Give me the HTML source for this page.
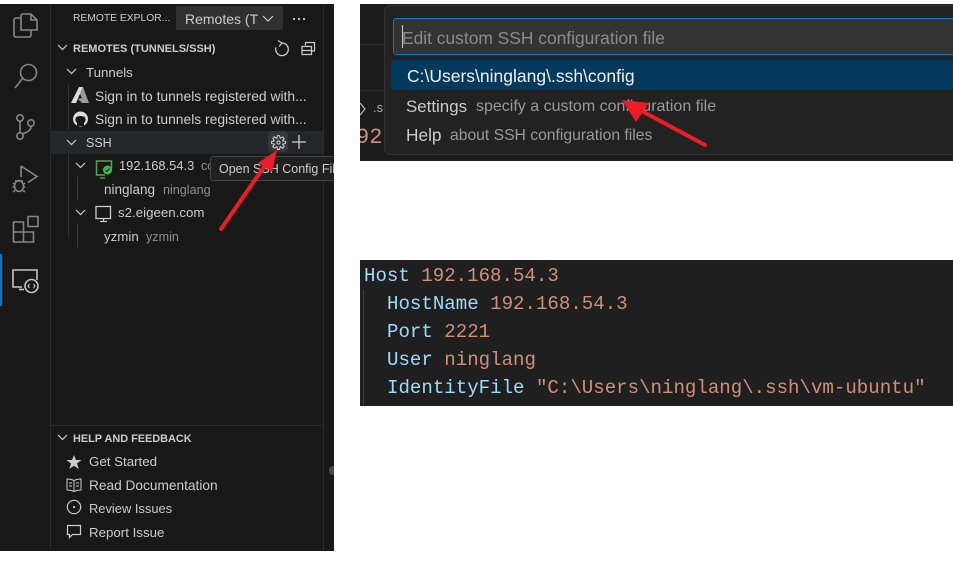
<!DOCTYPE html>
<html><head><meta charset="utf-8">
<style>
html,body{margin:0;padding:0;background:#fff;}
body{width:953px;height:561px;position:relative;overflow:hidden;font-family:"Liberation Sans",sans-serif;color:#ccc;}
div,span.a{position:absolute;}
.t{white-space:nowrap;font-size:13px;line-height:18px;color:#ccc;}
.d{color:#8f8f8f;font-size:12.6px;}
.b{font-weight:bold;font-size:11px;color:#ccc;}
.c{position:absolute;white-space:pre;font-family:"Liberation Mono",monospace;font-size:19.1px;line-height:28px;color:#ce9178;left:364px;}
.k{color:#9cdcfe;}
svg{position:absolute;overflow:visible;}
</style></head><body>

<!-- left window -->
<div style="left:0;top:4px;width:334px;height:547px;background:#181818;"></div>
<div style="left:50px;top:4px;width:1px;height:547px;background:#2b2b2b;"></div>
<div style="left:323px;top:4px;width:1px;height:547px;background:#2b2b2b;"></div>
<div style="left:0;top:254px;width:2px;height:52px;background:#0078d4;"></div>
<div style="left:51px;top:131px;width:272px;height:23px;background:#242628;"></div>
<div style="left:51px;top:425px;width:272px;height:1px;background:#2b2b2b;"></div>
<div style="left:68px;top:84px;width:1px;height:46px;background:#333;"></div>
<div style="left:68px;top:154px;width:1px;height:83px;background:#333;"></div>
<div style="left:77px;top:177px;width:1px;height:23px;background:#3a3a3a;"></div>
<div style="left:77px;top:224px;width:1px;height:23px;background:#3a3a3a;"></div>

<!-- activity icons -->
<svg style="left:0;top:0" width="50" height="310" fill="none" stroke="#868686" stroke-width="1.6">
<path d="M21 18h-5q-2 0-2 2v15q0 2 2 2h13q2 0 2-2v-5"/>
<path d="M23 14h8l6 6v10H21V16q0-2 2-2z"/>
<path d="M31 14v6h6"/>
<circle cx="28.500" cy="72.500" r="8"/><path d="M22.500 78.500L15 88"/>
<circle cx="20" cy="118" r="3.200"/><circle cx="20" cy="136" r="3.200"/><circle cx="31" cy="123" r="3.200"/>
<path d="M20 121.500V133M31 126.500q0 5-8 7"/>
<path d="M21 166l16 10.500-9 6"/><path d="M21 166v11"/>
<ellipse cx="19" cy="186" rx="4.500" ry="5.500"/><path d="M13 183l2 1.500M25 183l-2 1.500M12.500 187h2M23.500 187h2M13 192l2-1.500M25 192l-2-1.500M15 181h8"/>
<path d="M13.500 222h10v10h-10zM13.500 232h10v10h-10zM23.500 232h10v10h-10z"/><path d="M28 216.500h10v10H28z"/>
<g stroke="#c4c4c4">
<path d="M22 287h-9v-17h24v10"/><path d="M19 289.500h5"/>
<circle cx="31.500" cy="286" r="6.500" fill="#181818"/>
<path d="M29.500 284l-1.500 2 1.500 2M33.500 284l1.500 2-1.500 2" stroke-width="1.100"/>
</g>
</svg>

<!-- header -->
<div class="t" style="left:73px;top:10px;font-size:10.300px;color:#ccc;">REMOTE EXPLOR...</div>
<div style="left:176px;top:6px;width:107px;height:24px;background:#303030;border-radius:2px;"></div>
<div class="t" style="left:185px;top:10px;font-size:14px;color:#ccc;width:73px;overflow:hidden;">Remotes (Tunnels)</div>
<svg style="left:0;top:0" width="334" height="240" fill="none" stroke="#ccc" stroke-width="1.200">
<path d="M263 16l5 5 5-5"/>
<path d="M58 45l4.500 4.500L67 45M67 69l4.500 4.500L76 69M67 140l4.500 4.500L76 140M76 163l4.500 4.500L85 163M76 210l4.500 4.500L85 210"/>
<path d="M282 43a6.300 6.300 0 1 1-6 4.300" stroke-width="1.300"/>
<path d="M278 40.500l4 2.500-3 3.500" stroke-width="1.300"/>
<path d="M305.500 45.500v-3h9v8.500h-3M302 46.500h9.500v8h-9.500zM302 50.500h9.500"/>
</svg>
<svg style="left:292px;top:17px" width="14" height="4"><circle cx="2" cy="2" r="1.100" fill="#ccc"/><circle cx="7" cy="2" r="1.100" fill="#ccc"/><circle cx="12" cy="2" r="1.100" fill="#ccc"/></svg>

<div class="t b" style="left:73px;top:40px;">REMOTES (TUNNELS/SSH)</div>
<div class="t" style="left:86px;top:64px;font-size:13.300px;">Tunnels</div>

<!-- azure, github -->
<svg style="left:0;top:0" width="100" height="130">
<path d="M79 87h4l-7 16h-5z" fill="#ddd"/><path d="M83 87l6 16h-7l-4-4 4-1-2-4z" fill="#999"/>
<circle cx="80.500" cy="119" r="7.500" fill="#ddd"/>
<path d="M77 126v-3q-2-2-1.500-4 0-3 5-3t5 3q.5 2-1.500 4v3z" fill="#181818"/>
</svg>
<div class="t" style="left:95px;top:87px;font-size:13.850px;">Sign in to tunnels registered with...</div>
<div class="t" style="left:95px;top:110px;font-size:13.850px;">Sign in to tunnels registered with...</div>

<div class="t" style="left:86px;top:134px;font-size:12.500px;">SSH</div>
<div style="left:268px;top:131px;width:20px;height:21px;background:#34373a;border-radius:4px;"></div>
<svg style="left:269.500px;top:133.500px" width="17" height="17" viewBox="0 0 16 16"><path fill="#ccc" fill-rule="evenodd" d="M9.100 4.400L8.600 2H7.400l-.5 2.400-.7.3-2-1.300-.9.8 1.300 2-.2.7-2.400.5v1.200l2.400.5.3.8-1.300 2 .8.8 2-1.300.8.3.4 2.300h1.200l.5-2.400.8-.3 2 1.300.8-.8-1.300-2 .3-.8 2.300-.4V7.400l-2.400-.5-.3-.8 1.300-2-.8-.8-2 1.300-.7-.2zM9.400 1l.5 2.400L12 2.100l2 2-1.400 2.100 2.400.4v2.800l-2.400.5L14 12l-2 2-2.100-1.400-.5 2.400H6.600l-.5-2.400L4 13.900l-2-2 1.400-2.100L1 9.400V6.600l2.400-.5L2.100 4l2-2 2.100 1.400.4-2.400h2.800zm.6 7c0 1.100-.9 2-2 2s-2-.9-2-2 .9-2 2-2 2 .9 2 2zM8 9c.6 0 1-.4 1-1s-.4-1-1-1-1 .4-1 1 .4 1 1 1z"/></svg>
<svg style="left:0;top:0" width="334" height="240" fill="none">
<path d="M299 135v14M292 142h14" stroke="#ccc" stroke-width="1.300"/>
<path d="M105 175H96.500v-14h15v8" stroke="#57a64a" stroke-width="1.500"/>
<path d="M100 178h5" stroke="#57a64a" stroke-width="1.300"/>
<circle cx="107.500" cy="170" r="4.500" fill="#3fb950"/>
<path d="M105.500 170l1.500 1.500 2.500-3" stroke="#181818" stroke-width="1"/>
<path d="M96 206.500h14.500v12H96zM100 221.500h7M103.500 218.500v3" stroke="#ccc" stroke-width="1.300"/>
</svg>

<div class="t" style="left:119px;top:157px;font-size:12.900px;">192.168.54.3</div>
<div class="t d" style="left:201px;top:157px;">co</div>
<div class="t" style="left:104px;top:181px;font-size:13.500px;">ninglang</div>
<div class="t d" style="left:163px;top:181px;">ninglang</div>
<div class="t" style="left:118px;top:204px;font-size:13.300px;">s2.eigeen.com</div>
<div class="t" style="left:104px;top:228px;font-size:13.300px;">yzmin</div>
<div class="t d" style="left:146px;top:228px;">yzmin</div>

<!-- tooltip -->
<div style="left:210px;top:156px;width:124px;height:25px;background:#202020;border:1px solid #454545;border-right:0;border-radius:3px 0 0 3px;box-sizing:border-box;overflow:hidden;">
<div class="t" style="left:8px;top:3px;font-size:12.500px;">Open SSH Config File</div></div>

<!-- help -->
<svg style="left:0;top:0" width="334" height="551" fill="none" stroke="#ccc" stroke-width="1.200">
<path d="M58 435l4.500 4.500L67 435"/>
<path d="M74 455l2 5h5.500l-4.500 3.500 1.800 5.500-4.800-3.300-4.800 3.300 1.800-5.500-4.500-3.500H72z" fill="#ccc" stroke="none"/>
<path d="M74 480.500q-3-1.500-7-1.500v11q4 0 7 1.500 3-1.500 7-1.500v-11q-4 0-7 1.500zM74 480.500v11M69 483h3M69 486h3M76 483h3M76 486h3" stroke-width="1"/>
<circle cx="74" cy="507" r="6.700"/><circle cx="74" cy="507" r="1.100" fill="#ccc" stroke="none"/>
<path d="M67.500 525.500h13v9h-8l-3 3v-3h-2z"/>
</svg>
<div class="t b" style="left:73px;top:430px;font-size:10.900px;">HELP AND FEEDBACK</div>
<div class="t" style="left:89px;top:453px;font-size:13.300px;">Get Started</div>
<div class="t" style="left:89px;top:477px;font-size:13.700px;">Read Documentation</div>
<div class="t" style="left:89px;top:500px;font-size:12.900px;">Review Issues</div>
<div class="t" style="left:89px;top:524px;font-size:13.300px;">Report Issue</div>
<div style="left:329px;top:466px;width:5px;height:9px;background:#4a4a4a;border-radius:4px 0 0 4px;"></div>

<!-- top right -->
<div style="left:360px;top:4px;width:593px;height:157px;background:#1c1c1c;overflow:hidden;">
 <div style="left:0;top:40px;width:30px;height:1px;background:#2b2b2b;"></div>
 <div style="left:0;top:86px;width:30px;height:1px;background:#2b2b2b;"></div>
 <div class="t" style="left:13px;top:95px;font-size:13px;color:#aaa;">.s</div>
 <div style="left:-4px;top:122px;font-family:'Liberation Mono',monospace;font-size:22px;line-height:24px;color:#ce9178;white-space:nowrap;">92.</div>
 <svg style="left:0;top:0" width="20" height="120" fill="none"><path d="M0 99l5 6-5 6" stroke="#bbb" stroke-width="1.200"/></svg>
</div>
<div style="left:384px;top:5px;width:569px;height:150px;background:#222;border:1px solid #333;border-right:0;border-radius:7px 0 0 7px;box-sizing:border-box;"></div>
<div style="left:393px;top:18px;width:560px;height:37px;background:#333;border:1px solid #0078d4;border-right:0;border-radius:3px 0 0 3px;box-sizing:border-box;"></div>
<div style="left:402px;top:25px;width:1px;height:23px;background:#ccc;"></div>
<div class="t" style="left:402px;top:27px;font-size:17.400px;line-height:22px;color:#8c8c8c;">Edit custom SSH configuration file</div>
<div style="left:391px;top:60px;width:562px;height:30px;background:#04395e;border-radius:4px 0 0 4px;"></div>
<div class="t" style="left:407px;top:66px;font-size:17.500px;line-height:21px;color:#f0f0f0;">C:\Users\ninglang\.ssh\config</div>
<div class="t" style="left:406px;top:96px;font-size:16.900px;line-height:21px;color:#ccc;">Settings</div>
<div class="t" style="left:476px;top:96px;font-size:16px;line-height:21px;color:#9a9a9a;">specify a custom configuration file</div>
<div class="t" style="left:406px;top:125px;font-size:17.300px;line-height:21px;color:#ccc;">Help</div>
<div class="t" style="left:450px;top:125px;font-size:15.700px;line-height:21px;color:#9a9a9a;">about SSH configuration files</div>

<!-- code -->
<div style="left:360px;top:260px;width:593px;height:146px;background:#1f1f1f;"></div>
<div style="left:363px;top:290px;width:1px;height:116px;background:#404040;"></div>
<div class="c" style="top:262px;"><span class="k">Host</span> 192.168.54.3</div>
<div class="c" style="top:290px;left:387px;"><span class="k">HostName</span> 192.168.54.3</div>
<div class="c" style="top:318px;left:387px;"><span class="k">Port</span> 2221</div>
<div class="c" style="top:346px;left:387px;"><span class="k">User</span> ninglang</div>
<div class="c" style="top:374px;left:387px;"><span class="k">IdentityFile</span> "C:\Users\ninglang\.ssh\vm-ubuntu"</div>

<!-- arrows -->
<svg style="left:0;top:0" width="953" height="561" fill="none">
<path d="M221 229L268 161" stroke="#ee1c25" stroke-width="4" stroke-linecap="round"/>
<path d="M277 150l-19 13 14 9z" fill="#ee1c25"/>
<path d="M705 145L640 110" stroke="#ee1c25" stroke-width="4" stroke-linecap="round"/>
<path d="M622 100l27 3-13 19z" fill="#ee1c25"/>
</svg>
</body></html>
